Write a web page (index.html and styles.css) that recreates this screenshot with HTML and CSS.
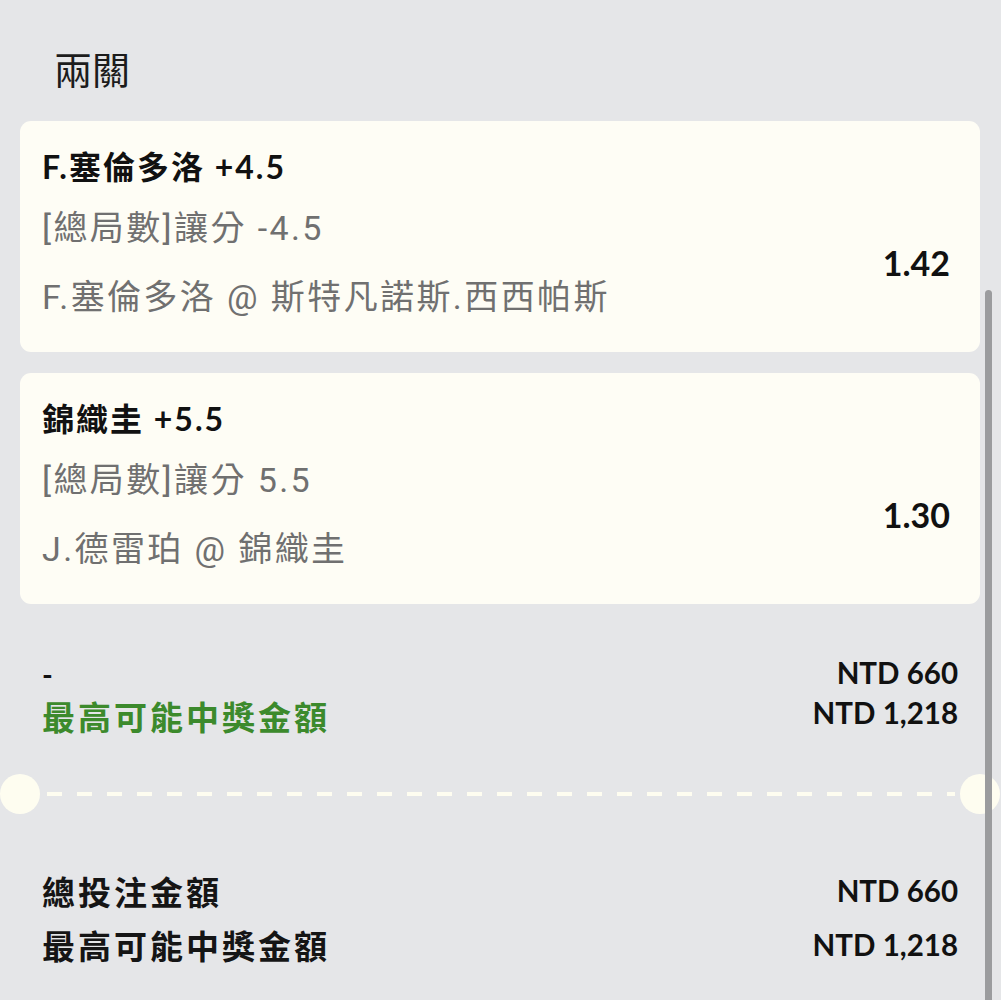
FILE: index.html
```html
<!DOCTYPE html>
<html lang="zh-Hant">
<head>
<meta charset="utf-8">
<title>兩關</title>
<link rel="stylesheet" href="styles.css">
</head>
<body>
<div class="page">
  <h1 class="heading">兩關</h1>

  <div class="card">
    <div class="sel">F.塞倫多洛 +4.5</div>
    <div class="card-row">
      <div class="info">
        <div class="market">[總局數]讓分 -4.5</div>
        <div class="match">F.塞倫多洛 @ 斯特凡諾斯.西西帕斯</div>
      </div>
      <div class="odds">1.42</div>
    </div>
  </div>

  <div class="card">
    <div class="sel">錦織圭 +5.5</div>
    <div class="card-row">
      <div class="info">
        <div class="market">[總局數]讓分 5.5</div>
        <div class="match">J.德雷珀 @ 錦織圭</div>
      </div>
      <div class="odds">1.30</div>
    </div>
  </div>

  <div class="summary">
    <div class="sum-left">
      <div class="dash-label">-</div>
      <div class="label green">最高可能中獎金額</div>
    </div>
    <div class="sum-right">
      <div class="amount">NTD 660</div>
      <div class="amount">NTD 1,218</div>
    </div>
  </div>

  <div class="divider"><div class="dashes"></div></div>

  <div class="totals">
    <div class="total-row">
      <div class="label">總投注金額</div>
      <div class="amount">NTD 660</div>
    </div>
    <div class="total-row">
      <div class="label">最高可能中獎金額</div>
      <div class="amount">NTD 1,218</div>
    </div>
  </div>

  <div class="scrollbar"></div>
</div>
</body>
</html>
```

FILE: styles.css
```css
html, body {
  margin: 0;
  padding: 0;
  background: #e5e6e8;
}

body {
  font-family: Lato, "Noto Sans CJK TC", sans-serif;
  color: #111;
  overflow: hidden;
}

.page {
  position: relative;
  width: 1001px;
  height: 1000px;
  padding: 45px 21px 0 20px;
  box-sizing: border-box;
  overflow: hidden;
}

.heading {
  margin: 0 0 30px 34px;
  font-family: "Noto Sans CJK TC", sans-serif;
  font-weight: 400;
  font-size: 38px;
  line-height: 46px;
  color: #1c1c1c;
}

.card {
  background: #fefdf5;
  border-radius: 11px;
  padding: 28px 30px 38px 22px;
  margin-bottom: 21px;
}

.sel {
  font-family: Lato, "Noto Sans CJK TC", sans-serif;
  font-weight: 700;
  font-size: 32px;
  line-height: 36px;
  letter-spacing: 2px;
  color: #111;
}

.card-row {
  display: flex;
  align-items: center;
  justify-content: space-between;
  margin-top: 26px;
}

.market, .match {
  font-family: Roboto, "Noto Sans CJK TC", sans-serif;
  font-weight: 400;
  font-size: 34px;
  line-height: 34px;
  letter-spacing: 2.4px;
  color: #707070;
}

.match {
  margin-top: 35px;
}

.odds {
  font-family: Lato, sans-serif;
  font-weight: 700;
  font-size: 34px;
  line-height: 36px;
  color: #111;
}

.summary {
  display: flex;
  justify-content: space-between;
  padding: 28px 22px 0 22px;
}

.dash-label {
  font-family: Lato, sans-serif;
  font-weight: 700;
  font-size: 29px;
  line-height: 42px;
}

.label {
  font-family: "Noto Sans CJK TC", sans-serif;
  font-weight: 700;
  font-size: 33px;
  line-height: 42px;
  letter-spacing: 3px;
  color: #151515;
}

.label.green {
  color: #3c8a2c;
}

.sum-right {
  display: flex;
  flex-direction: column;
  align-items: flex-end;
}

.amount {
  font-family: Lato, sans-serif;
  font-weight: 700;
  font-size: 29.5px;
  line-height: 40px;
  color: #111;
}

.divider {
  position: relative;
  height: 40px;
  margin: 37px -21px 0 -20px;
  display: flex;
  align-items: center;
  padding: 0 46px 0 47px;
}

.divider::before,
.divider::after {
  content: "";
  position: absolute;
  top: 0;
  width: 40px;
  height: 40px;
  border-radius: 50%;
  background: #fefdf0;
}

.divider::before { left: 0; }
.divider::after { right: 1px; }

.dashes {
  flex: 1;
  height: 4px;
  background: repeating-linear-gradient(to right, #fefdf0 0 15px, transparent 15px 30px);
}

.totals {
  padding: 50px 22px 0 22px;
}

.total-row {
  display: flex;
  justify-content: space-between;
  align-items: center;
  height: 54px;
}

.total-row .amount {
  line-height: 54px;
}

.scrollbar {
  position: absolute;
  left: 985px;
  top: 290px;
  width: 7px;
  height: 720px;
  border-radius: 4px;
  background: #9b9c9e;
}
```
